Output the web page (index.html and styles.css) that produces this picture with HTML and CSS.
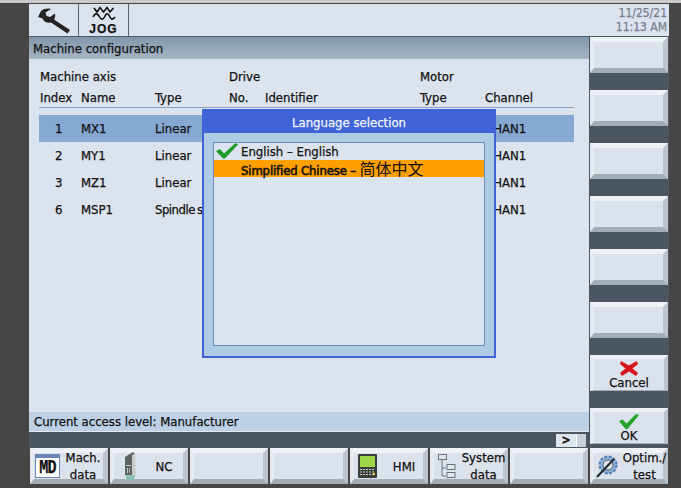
FILE: index.html
```html
<!DOCTYPE html>
<html lang="en">
<head>
<meta charset="utf-8">
<title>Machine configuration</title>
<link rel="stylesheet" href="styles.css">
</head>
<body>
<div class="screen">
  <div class="topline"></div>
  <div class="frame">
    <div class="left-col">
      <header class="header">
        <div class="hcell">
          <svg width="36" height="28" viewBox="0 0 36 28"><path d="M2 11 L5 5 C8 2.500 12 2 15 3 L9.500 6.500 L10.500 10 L14 11 L19 7.500 C19.500 10 19 12 18 13.500 L34 24 L31.500 27.500 L15 16.500 C11 17.500 8 16 6.500 12.500 Z" fill="#242424"/></svg>
        </div>
        <div class="hcell jog">
          <svg width="24" height="17" viewBox="0 0 24 17"><path d="M2 2 L5 6 L8 1.500 L11.500 6 L15 1.500 L18 6 L21.500 2" class="wave"/><path d="M1 11 C3 7 5 7 7 10 C9 14 11 14 12.500 11 C14 7 16 7 17.500 10 C19 14 21 14 23 11" class="wave"/></svg>
          <span class="jog-label">JOG</span>
        </div>
        <div class="clock"><span>11/25/21</span><span>11:13 AM</span></div>
      </header>
      <div class="title">Machine configuration</div>
      <main class="panel">
        <div class="row head1"><span class="c-wide">Machine axis</span><span class="c-drive">Drive</span><span class="c-motor">Motor</span></div>
        <div class="row head2"><span class="c1">Index</span><span class="c2">Name</span><span class="c3">Type</span><span class="c4">No.</span><span class="c5">Identifier</span><span class="c6">Type</span><span class="c7">Channel</span></div>
        <div class="rows">
          <div class="row data selected"><span class="c1 num">1</span><span class="c2">MX1</span><span class="c3">Linear</span><span class="c4"></span><span class="c5"></span><span class="c6"></span><span class="c7">CHAN1</span></div>
          <div class="row data"><span class="c1 num">2</span><span class="c2">MY1</span><span class="c3">Linear</span><span class="c4"></span><span class="c5"></span><span class="c6"></span><span class="c7">CHAN1</span></div>
          <div class="row data"><span class="c1 num">3</span><span class="c2">MZ1</span><span class="c3">Linear</span><span class="c4"></span><span class="c5"></span><span class="c6"></span><span class="c7">CHAN1</span></div>
          <div class="row data"><span class="c1 num">6</span><span class="c2">MSP1</span><span class="c3 tight">Spindle s</span><span class="c4"></span><span class="c5"></span><span class="c6"></span><span class="c7">CHAN1</span></div>
        </div>
      </main>
      <div class="status">Current access level: Manufacturer</div>
      <div class="scroll"><span class="more">&gt;</span><span class="more-box"></span></div>
    </div>
    <aside class="right-col">
      <div class="key"></div>
      <div class="key"></div>
      <div class="key"></div>
      <div class="key"></div>
      <div class="key"></div>
      <div class="key"></div>
      <div class="key stack">
        <svg width="18" height="15" viewBox="0 0 18 15"><path d="M1 0 L9 4.500 L16.500 0 L18 3 L12.500 7.500 L18 12 L16 15 L9 10.500 L2 15 L0 12 L5.500 7.500 L0 3 Z" fill="#d8141c"/></svg>
        <span>Cancel</span>
      </div>
      <div class="key stack">
        <svg width="20" height="15" viewBox="0 0 20 15"><path d="M0 7 L3.500 5.500 L7.500 9.500 L17 0 L20 1 L8.500 15 L6.500 15 Z" fill="#25a32c"/></svg>
        <span>OK</span>
      </div>
    </aside>
  </div>
  <nav class="bottom">
    <div class="key hkey">
      <span class="md"><span class="md-in">MD</span></span>
      <span class="lbl lbl-md">Mach.<br>data</span>
    </div>
    <div class="key hkey pad-nc">
      <svg class="ico" width="13" height="30" viewBox="0 0 13 30"><path d="M1 6 L9 1 L11 3 L11 24 L1 24 Z" fill="#5d6461"/><path d="M8 4 L11 3 L12 24 L8 24 Z" fill="#c8cfcb"/><path d="M1 24 H11 L10 29 H3 Z" fill="#8cc0b6"/><rect x="2" y="14" width="5" height="1" fill="#c6cdc9"/><rect x="3" y="17" width="1" height="5" fill="#c6cdc9"/><rect x="5" y="17" width="1" height="5" fill="#a0a7a3"/></svg>
      <span class="lbl single">NC</span>
    </div>
    <div class="key"></div>
    <div class="key"></div>
    <div class="key hkey pad-4">
      <svg class="ico" width="19" height="24" viewBox="0 0 19 24"><rect width="19" height="24" rx="1" fill="#3a3e3a"/><rect x="2" y="2" width="15" height="11" fill="#9fd648"/><path d="M2 15.500 H17 M2 18 H17 M2 20.500 H17" stroke="#c8c8c8" stroke-dasharray="2 1"/><rect x="15" y="19" width="2" height="2" fill="#e8d040"/></svg>
      <span class="lbl single">HMI</span>
    </div>
    <div class="key hkey pad-4">
      <svg class="ico" width="19" height="24" viewBox="0 0 19 24" fill="#dfe6ee" stroke="#69737d"><path d="M4 6 V22 H8 M4 14 H8" fill="none"/><rect x=".5" y=".5" width="8" height="5"/><rect x="9" y="10.500" width="8" height="5"/><rect x="9" y="18.500" width="8" height="5"/></svg>
      <span class="lbl">System<br>data</span>
    </div>
    <div class="key"></div>
    <div class="key hkey">
      <svg class="ico" width="24" height="24" viewBox="0 0 24 24"><circle cx="13" cy="11" r="8.500" fill="#8fb0d6" stroke="#4f7fb8" stroke-width="2" stroke-dasharray="3 1.500"/><circle cx="13" cy="11" r="5" fill="#dfe6ee" stroke="#51606f"/><path d="M2 23 L19 5" stroke="#23272b" stroke-width="2"/></svg>
      <span class="lbl">Optim./<br>test</span>
    </div>
  </nav>
  <section class="dialog">
    <div class="dialog-title">Language selection</div>
    <div class="list">
      <div class="item">
        <svg class="check" width="22" height="16" viewBox="0 0 22 16"><path d="M0 8 L4 6 L8 10.500 L19.500 0 L22 1.500 L9 15.500 L7 15.500 Z" fill="#1f9a2e"/></svg>
        <span>English – English</span>
      </div>
      <div class="item current"><span class="zh-label">Simplified Chinese – <span class="cjk">简体中文</span></span></div>
    </div>
  </section>
</div>
</body>
</html>
```

FILE: styles.css
```css
* { box-sizing: border-box; }
html, body { margin: 0; padding: 0; }
body {
  width: 681px;
  height: 488px;
  overflow: hidden;
  background: #464646;
  font-family: "DejaVu Sans", sans-serif;
  font-stretch: condensed;
  font-size: 13px;
  color: #111;
  -webkit-text-stroke: 0.25px currentColor;
}
.screen { position: relative; width: 681px; height: 488px; padding-left: 29px; }
.topline { position: absolute; left: 0; top: 0; width: 681px; height: 3px; background: #c9c9c9; }
.frame { display: flex; width: 640px; height: 448px; padding-top: 4px; }
.left-col { width: 560px; display: flex; flex-direction: column; background: #4b5660; }
.right-col {
  width: 80px;
  background: #4b5660;
  margin-top: 33px;
  padding: 0 1px;
  display: flex;
  flex-direction: column;
  gap: 17px;
}
.header { height: 33px; display: flex; position: relative; width: 640px; background: #dbe3ee; border-bottom: 1px solid #4b5660; }
.hcell { width: 50px; display: flex; flex-direction: column; align-items: center; justify-content: center; border-right: 1px solid #59636e; }
.wave { fill: none; stroke: #111; stroke-width: 1.600; }
.jog-label { font: bold 12px/12px "Liberation Sans", sans-serif; letter-spacing: 1px; }
.clock {
  margin-left: auto;
  padding: 2px 2px 0 0;
  display: flex;
  flex-direction: column;
  align-items: flex-end;
  color: #77808f;
  font-size: 12px;
  line-height: 14px;
}
.title {
  height: 22px;
  padding-left: 4px;
  font-size: 13px;
  line-height: 24px;
  background: linear-gradient(#8297ab, #a7b5c3);
}
.panel { height: 353px; background: #dbe3ee; padding-top: 8px; }
.row { display: flex; height: 20px; line-height: 20px; white-space: nowrap; }
.head1 { padding-left: 11px; height: 21px; }
.c-wide { width: 189px; }
.c-drive { width: 191px; }
.head2 { margin: 0 15px 0 10px; border-bottom: 1px solid #8ba0c0; padding-left: 1px; }
.rows { padding-top: 7px; }
.data { height: 27px; line-height: 27px; margin: 0 15px 0 10px; padding-left: 1px; }
.selected { background: #86a9d3; }
.c1 { width: 41px; }
.num { padding-left: 15px; }
.c2 { width: 74px; }
.c3 { width: 74px; }
.c4 { width: 36px; }
.c5 { width: 155px; }
.c6 { width: 65px; }
.tight { letter-spacing: -0.5px; word-spacing: -1px; }
.status { height: 20px; padding-left: 5px; line-height: 20px; background: #bdd0e5; border-bottom: 1px solid #e4e9f0; }
.scroll { height: 16px; display: flex; justify-content: flex-end; align-items: center; padding-right: 3px; }
.more { width: 20px; height: 13px; background: #dfe5ec; font-weight: bold; font-size: 12px; line-height: 13px; text-align: center; }
.more-box { width: 10px; height: 13px; background: #c6d1dc; border-left: 1px solid #fff; }
.key {
  width: 78px;
  height: 36px;
  background: #dce2eb;
  border-style: solid;
  border-width: 5px 5px 5px 4px;
  border-color: #eef2f7 #bcc5cf #a3adb8 #e6ebf1;
  flex: none;
  color: #111;
}
.stack { display: flex; flex-direction: column; align-items: center; justify-content: flex-end; line-height: 14px; border-width: 4px 4px 1px 4px; }
.bottom { display: flex; gap: 2px; width: 640px; padding-left: 1px; }
.hkey { display: flex; align-items: center; padding-left: 1px; }
.pad-nc { padding-left: 10px; }
.pad-4 { padding-left: 4px; }
.lbl { flex: 1; text-align: center; line-height: 17px; margin-right: -5px; padding-left: 2px; }
.lbl-md { padding-left: 0; margin-right: -3px; }
.single { padding-left: 3px; }
.ico { flex: none; }
.md { width: 25px; height: 24px; flex: none; border: 1px solid #6b86b5; border-top-width: 4px; background: #fff; display: flex; justify-content: center; align-items: center; overflow: hidden; }
.md-in { display: inline-block; font: bold 21px/18px "Liberation Mono", monospace; letter-spacing: -1px; transform: scaleX(0.72); }
.dialog {
  position: absolute;
  left: 202px;
  top: 109px;
  width: 294px;
  height: 249px;
  background: #aecbe6;
  border: 2px solid #3f63d6;
  border-top-width: 0;
  padding: 0 9px 10px 9px;
  display: flex;
  flex-direction: column;
}
.dialog-title {
  height: 24px;
  margin: 0 -9px 9px -9px;
  line-height: 28px;
  text-align: center;
  color: #f2f5fb;
  background: #3f63d6;
}
.list { flex: 1; background: #dbe3ee; border: 1px solid #6d8cb8; }
.item { height: 17px; line-height: 17px; padding-left: 27px; position: relative; }
.current { background: #ff9f00; line-height: 16px; }
.zh-label { -webkit-text-stroke: 0.55px #111; letter-spacing: -0.15px; }
.cjk { font-family: "Noto Sans CJK SC", sans-serif; font-size: 16px; line-height: 16px; letter-spacing: 0; -webkit-text-stroke: 0; }
.check { position: absolute; left: 2px; top: 0; }
```
